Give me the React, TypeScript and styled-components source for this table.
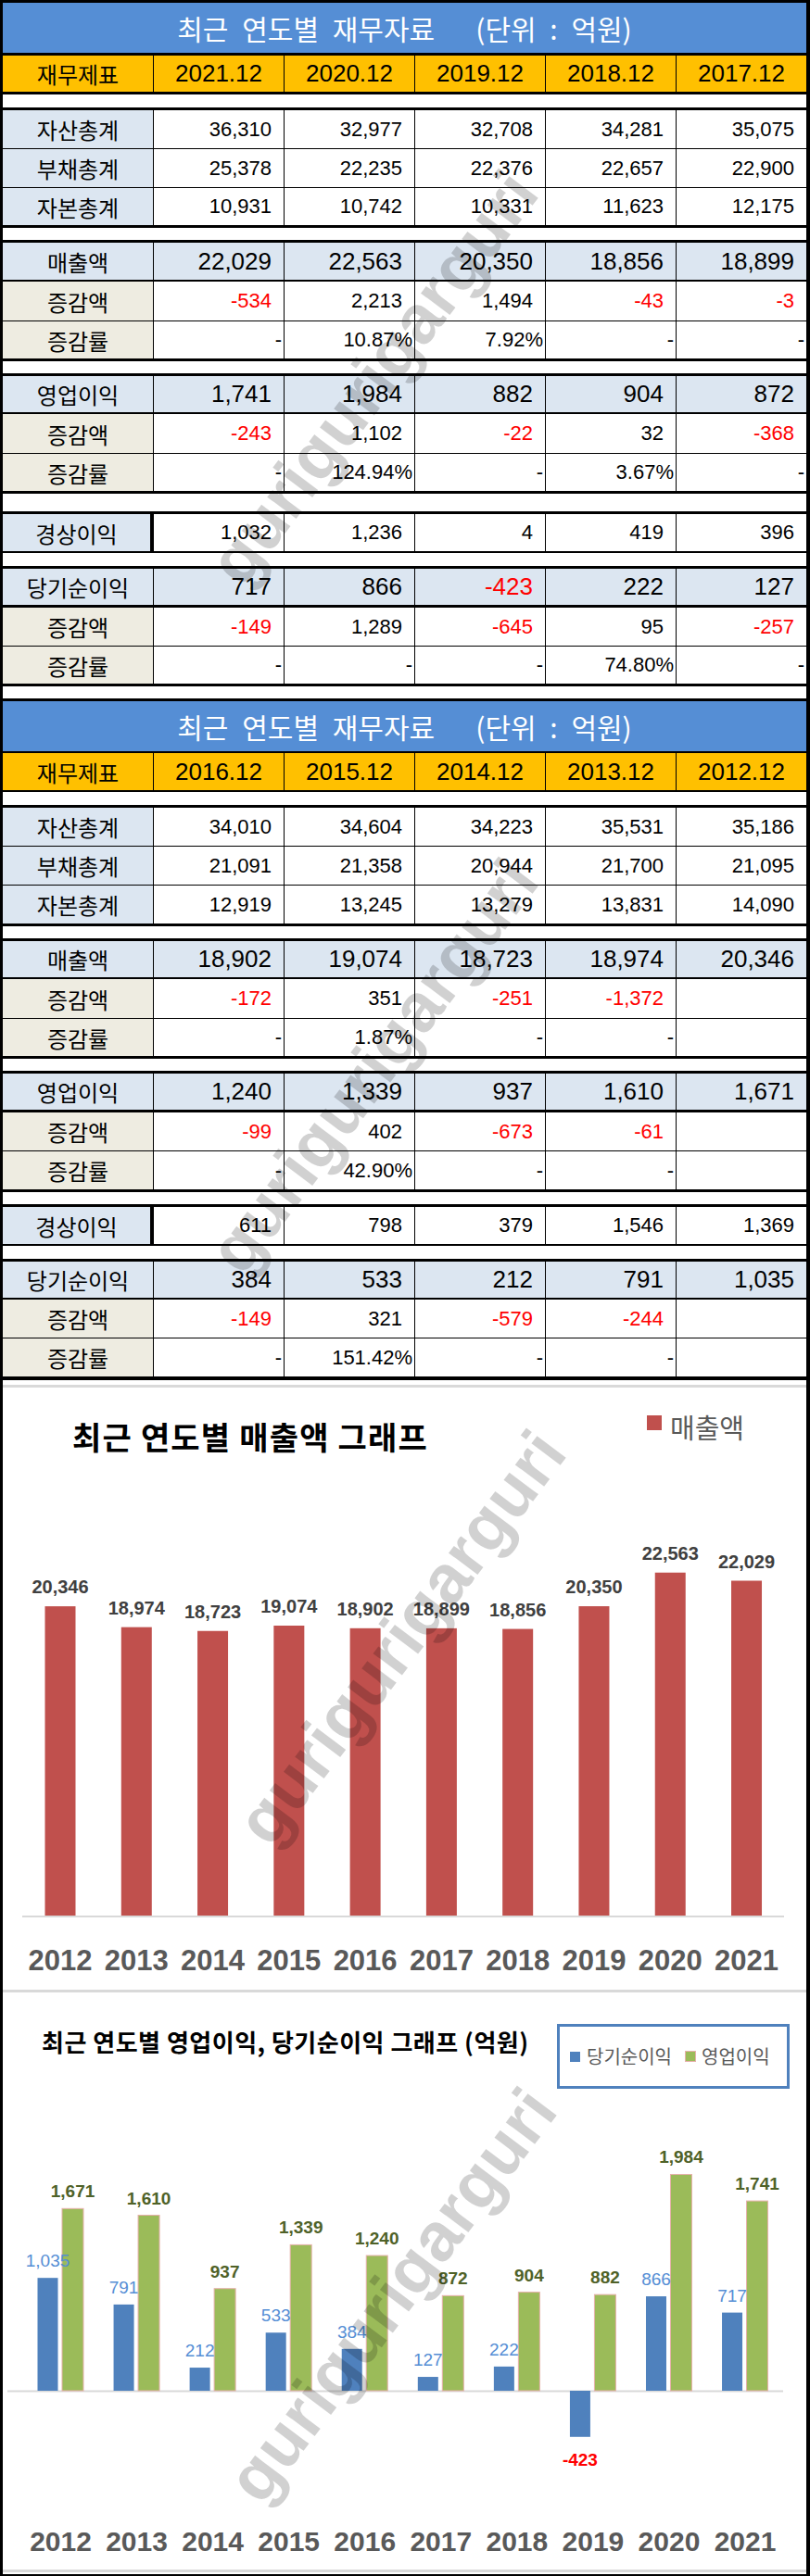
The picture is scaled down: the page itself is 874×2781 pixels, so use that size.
import React from 'react';
import styled, { createGlobalStyle } from 'styled-components';

const KR = `"Noto Sans CJK KR", "Noto Sans", sans-serif`;
const NUM = `"Liberation Sans", Arial, sans-serif`;

const GlobalStyle = createGlobalStyle`
  *, *::before, *::after { box-sizing: border-box; }
  html, body { margin: 0; padding: 0; background: #ffffff; }
`;

const Page = styled.div`
  position: relative;
  width: 874px;
  background: #fff;
  border-style: solid;
  border-color: #000;
  border-width: 3px 4px 4px 3px;
  overflow: hidden;
`;

const TitleBand = styled.div<{ $top: number; $h: number }>`
  height: ${p => p.$h + p.$top}px;
  border-top: ${p => p.$top}px solid #000;
  background: #558ed5;
  color: #fff;
  display: flex;
  align-items: center;
  justify-content: center;
  font-family: ${KR};
  font-size: 30px;
  word-spacing: 8px;
  white-space: pre;
`;

const Row = styled.div<{ $top: number; $h: number }>`
  display: grid;
  grid-template-columns: 162px repeat(5, 1fr);
  height: ${p => p.$h + p.$top}px;
  border-top: ${p => p.$top}px solid #000;
`;

const EmptyRow = styled.div<{ $top: number; $h: number }>`
  height: ${p => p.$h + p.$top}px;
  border-top: ${p => p.$top}px solid #000;
  background: #fff;
`;

const HeadCell = styled.div<{ $first?: boolean }>`
  background: #ffc000;
  display: flex;
  align-items: center;
  justify-content: center;
  border-left: ${p => (p.$first ? 'none' : '1px solid #000')};
  font-family: ${p => (p.$first ? KR : NUM)};
  font-size: ${p => (p.$first ? 24 : 26)}px;
  color: #000;
`;

const LabelCell = styled.div<{ $bg: string; $thick?: boolean }>`
  background: ${p => p.$bg};
  display: flex;
  align-items: center;
  justify-content: center;
  font-family: ${KR};
  font-size: 24px;
  color: #000;
  border-right: ${p => (p.$thick ? '3px solid #000' : 'none')};
`;

const ValueCell = styled.div<{ $bg: string; $size: number; $red: boolean; $pad: number }>`
  background: ${p => p.$bg};
  border-left: 1px solid #000;
  display: flex;
  align-items: center;
  justify-content: flex-end;
  padding-right: ${p => p.$pad}px;
  font-family: ${NUM};
  font-size: ${p => p.$size}px;
  color: ${p => (p.$red ? '#ff0000' : '#000')};
  white-space: nowrap;
`;

const GridStrip = styled.div<{ $h: number; $line: 'top' | 'bottom' }>`
  height: ${p => p.$h}px;
  background: #fff;
  border-${p => p.$line}: 3px solid #d9d9d9;
`;

const ChartPanel = styled.section<{ $h: number }>`
  height: ${p => p.$h}px;
  display: flex;
  flex-direction: column;
  background: #fff;
`;

const ChartHead = styled.header<{ $h: number }>`
  height: ${p => p.$h}px;
  flex: none;
  display: flex;
  justify-content: space-between;
  align-items: flex-start;
`;

const ChartTitle = styled.h2<{ $size: number; $left: number; $top: number; $ls: number }>`
  margin: ${p => p.$top}px 0 0 ${p => p.$left}px;
  font-family: ${KR};
  font-weight: 700;
  font-size: ${p => p.$size}px;
  letter-spacing: ${p => p.$ls}px;
  line-height: 1;
  color: #000;
  white-space: pre;
`;

const SalesLegend = styled.div`
  margin: 28px 67px 0 0;
  display: flex;
  align-items: flex-start;
  gap: 9px;
  font-family: ${KR};
  font-size: 29px;
  line-height: 1;
  color: #595959;
`;

const Swatch = styled.span<{ $color: string; $size: number; $edge?: string; $mt?: number }>`
  display: block;
  flex: none;
  width: ${p => p.$size}px;
  height: ${p => p.$size}px;
  margin-top: ${p => p.$mt ?? 0}px;
  background: ${p => p.$color};
  border: 1px solid ${p => p.$edge ?? p.$color};
`;

const LegendBox = styled.div`
  margin: 34px 18px 0 0;
  width: 251px;
  height: 70px;
  border: 3px solid #4f81bd;
  display: flex;
  align-items: center;
  padding-left: 11px;
  gap: 14px;
  font-family: ${KR};
  font-size: 20px;
  line-height: 1;
  color: #595959;
`;

const LegendItem = styled.span<{ $gap: number }>`
  display: flex;
  align-items: center;
  gap: ${p => p.$gap}px;
`;

const Plot = styled.svg`
  display: block;
  flex: none;
`;

const BarValue = styled.text<{ $color: string; $bold?: boolean; $size: number }>`
  font-family: ${NUM};
  font-size: ${p => p.$size}px;
  font-weight: ${p => (p.$bold ? 700 : 400)};
  fill: ${p => p.$color};
`;

const YearLabel = styled.text<{ $size: number }>`
  font-family: ${NUM};
  font-size: ${p => p.$size}px;
  font-weight: 700;
  fill: #595959;
`;

const Watermark = styled.span<{ $x: number; $y: number }>`
  position: absolute;
  left: ${p => p.$x}px;
  top: ${p => p.$y}px;
  transform: translate(-50%, -50%) rotate(-53deg);
  font-family: ${NUM};
  font-weight: 700;
  font-size: 74px;
  line-height: 1;
  color: rgba(0, 0, 0, 0.18);
  white-space: nowrap;
  pointer-events: none;
`;

type Kind = 'plain' | 'major' | 'sub' | 'single';
type Spec =
  | { t: 'title'; top: number; h: number }
  | { t: 'head'; top: number; h: number }
  | { t: 'empty'; top: number; h: number }
  | { t: 'data'; top: number; h: number; label: string; kind: Kind; values: string[] };

const BLUE = '#dce6f1';
const TAN = '#eeece1';

function DataRow({ spec }: { spec: Extract<Spec, { t: 'data' }> }) {
  const labelBg = spec.kind === 'sub' ? TAN : BLUE;
  const valueBg = spec.kind === 'major' ? BLUE : '#fff';
  const size = spec.kind === 'major' ? 26 : 22;
  return (
    <Row $top={spec.top} $h={spec.h}>
      <LabelCell $bg={labelBg} $thick={spec.kind === 'single'}>{spec.label}</LabelCell>
      {spec.values.map((v, i) => {
        const tight = v === '-' || v.endsWith('%');
        return (
          <ValueCell
            key={i}
            $bg={valueBg}
            $size={size}
            $red={v.startsWith('-') && v.length > 1}
            $pad={tight ? 2 : 13}
          >
            {v}
          </ValueCell>
        );
      })}
    </Row>
  );
}

function FinTable({ specs, years }: { specs: Spec[]; years: string[] }) {
  return (
    <>
      {specs.map((s, i) => {
        if (s.t === 'title')
          return (
            <TitleBand key={i} $top={s.top} $h={s.h}>
              {'최근 연도별 재무자료   (단위 : 억원)'}
            </TitleBand>
          );
        if (s.t === 'head')
          return (
            <Row key={i} $top={s.top} $h={s.h}>
              <HeadCell $first>재무제표</HeadCell>
              {years.map(y => (
                <HeadCell key={y}>{y}</HeadCell>
              ))}
            </Row>
          );
        if (s.t === 'empty') return <EmptyRow key={i} $top={s.top} $h={s.h} />;
        return <DataRow key={i} spec={s} />;
      })}
    </>
  );
}

const table1: Spec[] = [
  { t: 'title', top: 0, h: 54 },
  { t: 'head', top: 3, h: 39 },
  { t: 'empty', top: 3, h: 14 },
  { t: 'data', top: 3, h: 41, label: '자산총계', kind: 'plain', values: ['36,310', '32,977', '32,708', '34,281', '35,075'] },
  { t: 'data', top: 1, h: 41, label: '부채총계', kind: 'plain', values: ['25,378', '22,235', '22,376', '22,657', '22,900'] },
  { t: 'data', top: 1, h: 40, label: '자본총계', kind: 'plain', values: ['10,931', '10,742', '10,331', '11,623', '12,175'] },
  { t: 'empty', top: 3, h: 13 },
  { t: 'data', top: 3, h: 40, label: '매출액', kind: 'major', values: ['22,029', '22,563', '20,350', '18,856', '18,899'] },
  { t: 'data', top: 2, h: 42, label: '증감액', kind: 'sub', values: ['-534', '2,213', '1,494', '-43', '-3'] },
  { t: 'data', top: 1, h: 40, label: '증감률', kind: 'sub', values: ['-', '10.87%', '7.92%', '-', '-'] },
  { t: 'empty', top: 3, h: 13 },
  { t: 'data', top: 3, h: 39, label: '영업이익', kind: 'major', values: ['1,741', '1,984', '882', '904', '872'] },
  { t: 'data', top: 2, h: 42, label: '증감액', kind: 'sub', values: ['-243', '1,102', '-22', '32', '-368'] },
  { t: 'data', top: 1, h: 40, label: '증감률', kind: 'sub', values: ['-', '124.94%', '-', '3.67%', '-'] },
  { t: 'empty', top: 3, h: 19 },
  { t: 'data', top: 3, h: 40, label: '경상이익', kind: 'single', values: ['1,032', '1,236', '4', '419', '396'] },
  { t: 'empty', top: 2, h: 14 },
  { t: 'data', top: 3, h: 39, label: '당기순이익', kind: 'major', values: ['717', '866', '-423', '222', '127'] },
  { t: 'data', top: 3, h: 41, label: '증감액', kind: 'sub', values: ['-149', '1,289', '-645', '95', '-257'] },
  { t: 'data', top: 1, h: 40, label: '증감률', kind: 'sub', values: ['-', '-', '-', '74.80%', '-'] },
  { t: 'empty', top: 3, h: 13 },
];

const table2: Spec[] = [
  { t: 'title', top: 3, h: 54 },
  { t: 'head', top: 2, h: 40 },
  { t: 'empty', top: 2, h: 14 },
  { t: 'data', top: 3, h: 41, label: '자산총계', kind: 'plain', values: ['34,010', '34,604', '34,223', '35,531', '35,186'] },
  { t: 'data', top: 1, h: 41, label: '부채총계', kind: 'plain', values: ['21,091', '21,358', '20,944', '21,700', '21,095'] },
  { t: 'data', top: 1, h: 41, label: '자본총계', kind: 'plain', values: ['12,919', '13,245', '13,279', '13,831', '14,090'] },
  { t: 'empty', top: 3, h: 13 },
  { t: 'data', top: 3, h: 39, label: '매출액', kind: 'major', values: ['18,902', '19,074', '18,723', '18,974', '20,346'] },
  { t: 'data', top: 2, h: 42, label: '증감액', kind: 'sub', values: ['-172', '351', '-251', '-1,372', ''] },
  { t: 'data', top: 1, h: 40, label: '증감률', kind: 'sub', values: ['-', '1.87%', '-', '-', ''] },
  { t: 'empty', top: 3, h: 13 },
  { t: 'data', top: 3, h: 39, label: '영업이익', kind: 'major', values: ['1,240', '1,339', '937', '1,610', '1,671'] },
  { t: 'data', top: 3, h: 41, label: '증감액', kind: 'sub', values: ['-99', '402', '-673', '-61', ''] },
  { t: 'data', top: 1, h: 41, label: '증감률', kind: 'sub', values: ['-', '42.90%', '-', '-', ''] },
  { t: 'empty', top: 3, h: 13 },
  { t: 'data', top: 3, h: 40, label: '경상이익', kind: 'single', values: ['611', '798', '379', '1,546', '1,369'] },
  { t: 'empty', top: 2, h: 14 },
  { t: 'data', top: 3, h: 39, label: '당기순이익', kind: 'major', values: ['384', '533', '212', '791', '1,035'] },
  { t: 'data', top: 2, h: 41, label: '증감액', kind: 'sub', values: ['-149', '321', '-579', '-244', ''] },
  { t: 'data', top: 1, h: 41, label: '증감률', kind: 'sub', values: ['-', '151.42%', '-', '-', ''] },
];

const TableEnd = styled.div`
  height: 4px;
  background: #000;
`;

const YEARS = ['2012', '2013', '2014', '2015', '2016', '2017', '2018', '2019', '2020', '2021'];
const SALES = [20346, 18974, 18723, 19074, 18902, 18899, 18856, 20350, 22563, 22029];
const NET = [1035, 791, 212, 533, 384, 127, 222, -423, 866, 717];
const OP = [1671, 1610, 937, 1339, 1240, 872, 904, 882, 1984, 1741];
const fmt = (n: number) => n.toLocaleString('en-US');

function SalesChart() {
  const base = 480;
  const k = 0.01641;
  return (
    <ChartPanel $h={650}>
      <ChartHead $h={90}>
        <ChartTitle $size={34} $left={75} $top={36} $ls={1.2}>
          최근 연도별 매출액 그래프
        </ChartTitle>
        <SalesLegend>
          <Swatch $color="#c0504d" $size={16} $mt={2} />
          <span>매출액</span>
        </SalesLegend>
      </ChartHead>
      <Plot width={867} height={560} viewBox="0 0 867 560">
        <line x1={21} x2={843} y1={base + 1} y2={base + 1} stroke="#d9d9d9" strokeWidth={2} />
        {SALES.map((v, i) => {
          const c = 62 + i * 82.28;
          const h = v * k;
          return (
            <g key={i}>
              <rect x={c - 16.5} y={base - h} width={33} height={h} fill="#c0504d" />
              <BarValue x={c} y={base - h - 14} textAnchor="middle" $color="#404040" $bold $size={20}>
                {fmt(v)}
              </BarValue>
              <YearLabel x={c} y={539} textAnchor="middle" $size={31}>
                {YEARS[i]}
              </YearLabel>
            </g>
          );
        })}
      </Plot>
    </ChartPanel>
  );
}

function ProfitChart() {
  const base = 320;
  const k = 0.1177;
  return (
    <ChartPanel $h={623}>
      <ChartHead $h={110}>
        <ChartTitle $size={26} $left={42} $top={40} $ls={0.5}>
          최근 연도별 영업이익, 당기순이익 그래프 (억원)
        </ChartTitle>
        <LegendBox>
          <LegendItem $gap={7}>
            <Swatch $color="#4f81bd" $size={11} />
            <span>당기순이익</span>
          </LegendItem>
          <LegendItem $gap={6}>
            <Swatch $color="#9bbb59" $edge="#e6b0aa" $size={12} />
            <span>영업이익</span>
          </LegendItem>
        </LegendBox>
      </ChartHead>
      <Plot width={867} height={513} viewBox="0 0 867 513">
        <line x1={5} x2={842} y1={base + 0.5} y2={base + 0.5} stroke="#d9d9d9" strokeWidth={2} />
        {YEARS.map((y, i) => {
          const c = 62.5 + i * 82.06;
          const nv = NET[i];
          const nh = Math.abs(nv) * k;
          const oh = OP[i] * k;
          const neg = nv < 0;
          return (
            <g key={y}>
              <rect x={c - 25} y={neg ? base : base - nh} width={22} height={nh} fill="#4f81bd" />
              <rect x={c + 1.5} y={base - oh} width={23} height={oh} fill="#9bbb59" stroke="#e6b0aa" strokeWidth={1} />
              <BarValue
                x={c - 14}
                y={neg ? base + nh + 31 : base - nh - 12}
                textAnchor="middle"
                $color={neg ? '#ff0000' : '#558ed5'}
                $bold={neg}
                $size={19}
              >
                {fmt(nv)}
              </BarValue>
              <BarValue x={c + 13} y={base - oh - 12} textAnchor="middle" $color="#4f6228" $bold $size={19}>
                {fmt(OP[i])}
              </BarValue>
              <YearLabel x={c} y={493} textAnchor="middle" $size={30}>
                {y}
              </YearLabel>
            </g>
          );
        })}
      </Plot>
    </ChartPanel>
  );
}

export default function App() {
  return (
    <>
      <GlobalStyle />
      <Page>
        <FinTable specs={table1} years={['2021.12', '2020.12', '2019.12', '2018.12', '2017.12']} />
        <FinTable specs={table2} years={['2016.12', '2015.12', '2014.12', '2013.12', '2012.12']} />
        <TableEnd />
        <GridStrip $h={8} $line="bottom" />
        <SalesChart />
        <GridStrip $h={3} $line="bottom" />
        <ProfitChart />
        <GridStrip $h={5} $line="top" />
        <Watermark $x={400} $y={405}>gurigurigarguri</Watermark>
        <Watermark $x={400} $y={1148}>gurigurigarguri</Watermark>
        <Watermark $x={430} $y={1765}>gurigurigarguri</Watermark>
        <Watermark $x={420} $y={2475}>gurigurigarguri</Watermark>
      </Page>
    </>
  );
}
